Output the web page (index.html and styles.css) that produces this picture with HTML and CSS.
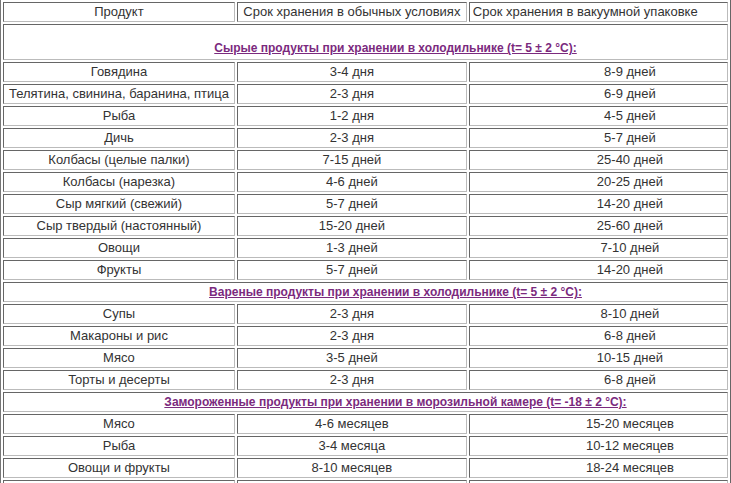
FILE: index.html
```html
<!DOCTYPE html>
<html lang="ru">
<head>
<meta charset="utf-8">
<title>Сроки хранения</title>
<link rel="stylesheet" href="styles.css">
</head>
<body>
<table class="storage">
  <colgroup>
    <col class="c1"><col class="c2"><col class="c3">
  </colgroup>
  <tr><td>Продукт</td><td>Срок хранения в обычных условиях</td><td class="head3">Срок хранения в вакуумной упаковке</td></tr>
  <tr><td colspan="3" class="section tall"><a href="#">Сырые продукты при хранении в холодильнике (t= 5 ± 2 °C):</a></td></tr>
  <tr><td>Говядина</td><td>3-4 дня</td><td class="v3">8-9 дней</td></tr>
  <tr><td>Телятина, свинина, баранина, птица</td><td>2-3 дня</td><td class="v3">6-9 дней</td></tr>
  <tr><td>Рыба</td><td>1-2 дня</td><td class="v3">4-5 дней</td></tr>
  <tr><td>Дичь</td><td>2-3 дня</td><td class="v3">5-7 дней</td></tr>
  <tr><td>Колбасы (целые палки)</td><td>7-15 дней</td><td class="v3">25-40 дней</td></tr>
  <tr><td>Колбасы (нарезка)</td><td>4-6 дней</td><td class="v3">20-25 дней</td></tr>
  <tr><td>Сыр мягкий (свежий)</td><td>5-7 дней</td><td class="v3">14-20 дней</td></tr>
  <tr><td>Сыр твердый (настоянный)</td><td>15-20 дней</td><td class="v3">25-60 дней</td></tr>
  <tr><td>Овощи</td><td>1-3 дней</td><td class="v3">7-10 дней</td></tr>
  <tr><td>Фрукты</td><td>5-7 дней</td><td class="v3">14-20 дней</td></tr>
  <tr><td colspan="3" class="section"><a href="#">Вареные продукты при хранении в холодильнике (t= 5 ± 2 °C):</a></td></tr>
  <tr><td>Супы</td><td>2-3 дня</td><td class="v3">8-10 дней</td></tr>
  <tr><td>Макароны и рис</td><td>2-3 дня</td><td class="v3">6-8 дней</td></tr>
  <tr><td>Мясо</td><td>3-5 дней</td><td class="v3">10-15 дней</td></tr>
  <tr><td>Торты и десерты</td><td>2-3 дня</td><td class="v3">6-8 дней</td></tr>
  <tr><td colspan="3" class="section"><a href="#">Замороженные продукты при хранении в морозильной камере (t= -18 ± 2 °C):</a></td></tr>
  <tr><td>Мясо</td><td>4-6 месяцев</td><td class="v3">15-20 месяцев</td></tr>
  <tr><td>Рыба</td><td>3-4 месяца</td><td class="v3">10-12 месяцев</td></tr>
  <tr><td>Овощи и фрукты</td><td>8-10 месяцев</td><td class="v3">18-24 месяцев</td></tr>
  <tr><td>&nbsp;</td><td>&nbsp;</td><td class="v3">&nbsp;</td></tr>
</table>
</body>
</html>
```
FILE: styles.css
```css
html, body {
  margin: 0;
  padding: 0;
  background: #fff;
}

.storage {
  margin: -1px 0 0 0;
  width: 731px;
  table-layout: fixed;
  border-collapse: separate;
  border-spacing: 2px;
  border: 1px solid;
  border-color: #999 #666 #666 #777;
  font-family: "Liberation Sans", Arial, sans-serif;
  font-size: 13px;
  color: #333;
}

.c1 { width: 230px; }
.c2 { width: 228px; }
.c3 { width: 257px; }

.storage td {
  height: 18px;
  padding: 0;
  line-height: 18px;
  text-align: center;
  white-space: nowrap;
  overflow: hidden;
  border: 1px solid;
  border-color: #666 #bbb #bbb #666;
}

.storage td.head3 {
  text-align: left;
  padding-left: 3px;
}

.storage td.v3 {
  padding-left: 63px;
}

.storage td.section {
  padding-left: 60px;
  font-size: 12px;
  font-weight: bold;
}

.storage td.tall {
  height: 34px;
  vertical-align: bottom;
  line-height: 22px;
}

.section a {
  color: #7b2a7e;
  text-decoration: underline;
}
```
